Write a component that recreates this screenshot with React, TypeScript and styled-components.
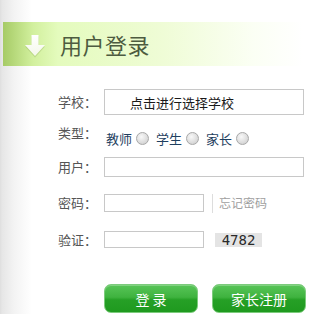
import React from "react";
import styled, { createGlobalStyle } from "styled-components";

const Global = createGlobalStyle`
  html, body { margin: 0; padding: 0; background: #fff; }
  body { font-family: "Noto Sans CJK SC", "Noto Sans", sans-serif; }
`;

const Page = styled.div`
  width: 316px;
  height: 314px;
  overflow: hidden;
  box-sizing: border-box;
  padding-top: 22px;
  background: linear-gradient(to right, #dedede 0, #e6e6e6 2px, #f3f3f3 14px, #fff 32px);
`;

const Header = styled.div`
  margin-left: 3px;
  height: 44px;
  display: flex;
  align-items: center;
  background: linear-gradient(to right, #a6cb66 0, #d2f09e 30px, #e4fbbd 55px, #effcd6 160px, #fbfff4 250px, #fff 300px);
`;

const ArrowBox = styled.div`
  width: 22px;
  margin-left: 21px;
  margin-top: 4px;
  display: flex;
`;

const Title = styled.h1`
  margin: 0 0 0 14px;
  font-size: 22px;
  font-weight: 400;
  color: #4d5b40;
  letter-spacing: 0.5px;
`;

const Form = styled.div`
  padding-left: 58px;
  display: flex;
  flex-direction: column;
`;

const Row = styled.div<{ $top: number; $align?: string }>`
  display: flex;
  align-items: ${(p) => p.$align || "center"};
  margin-top: ${(p) => p.$top}px;
`;

const Label = styled.span`
  width: 46px;
  font-size: 13px;
  color: #555;
  line-height: 16px;
  white-space: nowrap;
`;

const Input = styled.div<{ $w: number; $h: number }>`
  box-sizing: border-box;
  width: ${(p) => p.$w}px;
  height: ${(p) => p.$h}px;
  border: 1px solid #c8c8c8;
  background: #fff;
  display: flex;
  align-items: center;
`;

const Placeholder = styled.span`
  padding-left: 25px;
  font-size: 13px;
  color: #1a1a1a;
`;

const RadioGroup = styled.div`
  display: flex;
  align-items: center;
  padding-top: 6px;
  padding-left: 2px;
`;

const RadioText = styled.span`
  font-size: 13px;
  color: #1f3f5f;
  margin-right: 4px;
  line-height: 16px;
`;

const Radio = styled.span`
  width: 11px;
  height: 11px;
  border-radius: 50%;
  border: 1px solid #a8a8a8;
  background: radial-gradient(circle at 40% 35%, #f8f8f8 0, #dcdcdc 60%, #c8c8c8 100%);
  margin-right: 7px;
  margin-top: -2px;
`;

const Separator = styled.span`
  width: 1px;
  height: 19px;
  background: #ddd;
  margin-left: 8px;
  margin-top: 2px;
`;

const Forgot = styled.span`
  font-size: 12px;
  color: #a0a0a0;
  margin-left: 6px;
`;

const Captcha = styled.span`
  margin-left: 11px;
  width: 47px;
  height: 14px;
  background: #e4e4e4;
  font-family: "DejaVu Sans Mono", "Liberation Mono", monospace;
  font-size: 14px;
  line-height: 14px;
  color: #2a2a2a;
  text-align: center;
`;

const Buttons = styled.div`
  display: flex;
  gap: 14px;
  margin-top: 36px;
  padding-left: 46px;
`;

const Button = styled.button`
  box-sizing: border-box;
  width: 94px;
  height: 29px;
  border-radius: 7px;
  border: 1px solid #7ccb7c;
  background: linear-gradient(to bottom, #58c458 0, #3fb33f 45%, #26a026 55%, #1f9a1f 100%);
  box-shadow: inset 0 1px 0 rgba(255, 255, 255, 0.25);
  color: #fff;
  font-family: "Noto Sans CJK SC", sans-serif;
  font-size: 14px;
  padding: 0;
  cursor: pointer;
`;

const DownArrow = () => (
  <svg width="22" height="24" viewBox="0 0 22 24">
    <defs>
      <linearGradient id="ag" x1="0" y1="0" x2="0" y2="1">
        <stop offset="0" stopColor="#ffffff" />
        <stop offset="1" stopColor="#f4f8ea" />
      </linearGradient>
    </defs>
    <path d="M7.5 1 H14.5 V11 H21 L11 22 L1 11 H7.5 Z" fill="#8fae5a" opacity="0.35" transform="translate(0 1.5)" />
    <path d="M7.5 1 H14.5 V11 H21 L11 22 L1 11 H7.5 Z" fill="url(#ag)" />
  </svg>
);

export default function App() {
  return (
    <>
      <Global />
      <Page>
        <Header>
          <ArrowBox>
            <DownArrow />
          </ArrowBox>
          <Title>用户登录</Title>
        </Header>
        <Form>
          <Row $top={23}>
            <Label>学校：</Label>
            <Input $w={200} $h={26}>
              <Placeholder>点击进行选择学校</Placeholder>
            </Input>
          </Row>
          <Row $top={10} $align="flex-start">
            <Label>类型：</Label>
            <RadioGroup>
              <RadioText>教师</RadioText>
              <Radio />
              <RadioText>学生</RadioText>
              <Radio />
              <RadioText>家长</RadioText>
              <Radio />
            </RadioGroup>
          </Row>
          <Row $top={10}>
            <Label>用户：</Label>
            <Input $w={200} $h={20} />
          </Row>
          <Row $top={15}>
            <Label>密码：</Label>
            <Input $w={100} $h={18} />
            <Separator />
            <Forgot>忘记密码</Forgot>
          </Row>
          <Row $top={18}>
            <Label>验证：</Label>
            <Input $w={100} $h={17} />
            <Captcha>4782</Captcha>
          </Row>
        </Form>
        <Form>
          <Buttons>
            <Button>登 录</Button>
            <Button>家长注册</Button>
          </Buttons>
        </Form>
      </Page>
    </>
  );
}
